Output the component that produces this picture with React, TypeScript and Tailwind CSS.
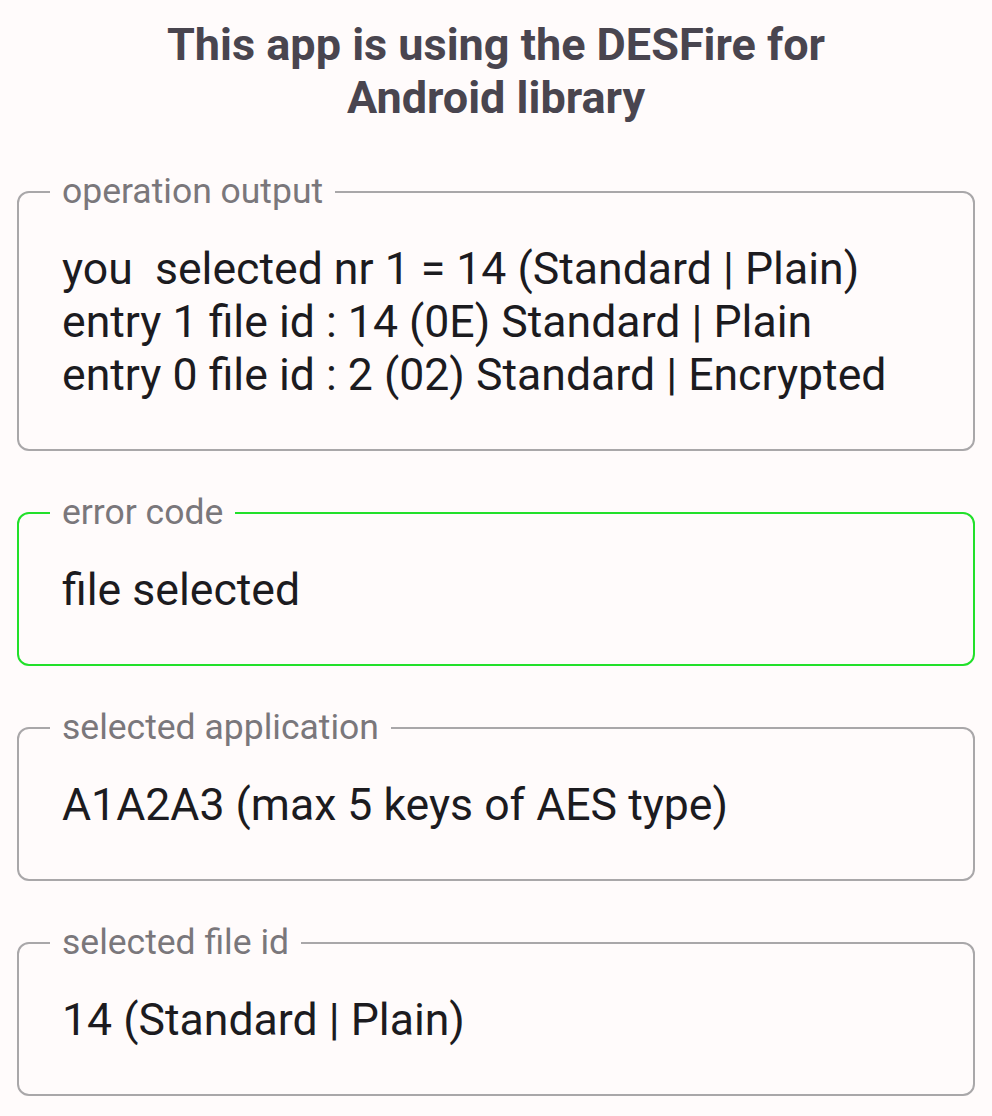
import React from "react";

function Field({ label, lines, focused }: { label: string; lines: string[]; focused?: boolean }) {
  return (
    <fieldset
      className={
        "mx-[17px] rounded-[12px] border-2 pl-[31px] pr-[31px] pt-[34px] pb-[47px] " +
        (focused ? "border-[#22e02a]" : "border-[#a9a7a9]")
      }
    >
      <legend className="px-[12px] text-[35.5px] leading-[35px] text-[#7a777b]">{label}</legend>
      <div className="pl-[12px] text-[44.6px] leading-[53px] text-[#1c1b1f]">
        {lines.map((l, i) => (
          <div key={i} className="whitespace-pre">{l}</div>
        ))}
      </div>
    </fieldset>
  );
}

export default function App() {
  return (
    <div
      className="min-h-[1116px] w-full bg-[#fffbfb] pt-[18px]"
      style={{ fontFamily: "Roboto, 'Noto Sans', sans-serif" }}
    >
      <h1 className="text-center text-[45px] font-bold leading-[53px] text-[#49454f]">
        This app is using the DESFire for
        <br />
        Android library
      </h1>
      <div className="mt-[50px] flex flex-col gap-[44px]">
        <Field
          label="operation output"
          lines={[
            "you  selected nr 1 = 14 (Standard | Plain)",
            "entry 1 file id : 14 (0E) Standard | Plain",
            "entry 0 file id : 2 (02) Standard | Encrypted",
          ]}
        />
        <Field label="error code" lines={["file selected"]} focused />
        <Field label="selected application" lines={["A1A2A3 (max 5 keys of AES type)"]} />
        <Field label="selected file id" lines={["14 (Standard | Plain)"]} />
      </div>
    </div>
  );
}
